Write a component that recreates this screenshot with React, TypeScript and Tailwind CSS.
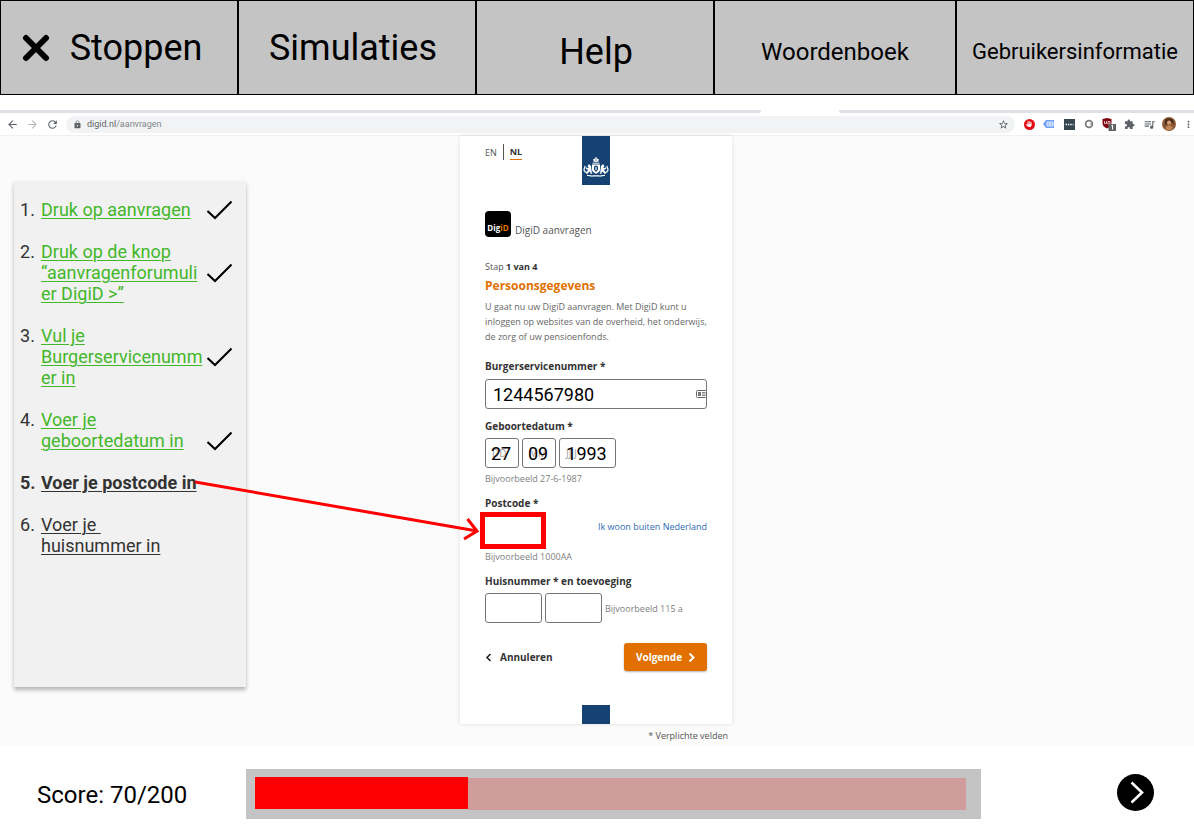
import React from "react";
import { clsx } from "clsx";
import {
  MdArrowBack,
  MdArrowForward,
  MdExtension,
  MdLock,
  MdMoreVert,
  MdQueueMusic,
  MdRefresh,
  MdStarBorder,
} from "react-icons/md";
import { FaHand } from "react-icons/fa6";

interface Step {
  text: string;
  state: "done" | "current" | "todo";
  checkAtEnd?: boolean;
}

const steps: Step[] = [
  { text: "Druk op aanvragen", state: "done" },
  { text: "Druk op de knop “aanvragenforumulier DigiD >”", state: "done" },
  { text: "Vul je Burgerservicenummer in", state: "done" },
  { text: "Voer je geboortedatum in", state: "done", checkAtEnd: true },
  { text: "Voer je postcode in", state: "current" },
  { text: "Voer je\u00a0\nhuisnummer in", state: "todo" },
];

const navButton = "flex items-center justify-center border border-black bg-[#c4c4c4] whitespace-nowrap";

const TopNav = () => (
  <nav className="grid h-[95px] grid-cols-[238fr_238fr_238fr_242fr_238fr] text-black">
    <button className={clsx(navButton, "gap-5 pr-3.5 text-4xl")}>
      <svg width="28" height="28" viewBox="0 0 28 28" aria-hidden="true">
        <path d="M4 4 24 24M24 4 4 24" stroke="#000" strokeWidth="6" strokeLinecap="round" />
      </svg>
      Stoppen
    </button>
    <button className={clsx(navButton, "pr-2 text-4xl")}>Simulaties</button>
    <button className={clsx(navButton, "pt-2 pl-0.5 text-4xl")}>Help</button>
    <button className={clsx(navButton, "pt-2 text-2xl")}>Woordenboek</button>
    <button className={clsx(navButton, "pt-2 text-[22px]")}>Gebruikersinformatie</button>
  </nav>
);

const Cell = ({ children }: { children: React.ReactNode }) => (
  <span className="flex w-5 shrink-0 items-center justify-center">{children}</span>
);

const BrowserBar = () => (
  <div className="mt-[15px]">
    <div className="flex h-[3px] justify-between">
      <div className="w-[761px] rounded-br-[3px] bg-[#dee1e6]" />
      <div className="w-[355px] rounded-bl-[3px] bg-[#dee1e6]" />
    </div>
    <div className="flex h-[23px] items-center border-b border-[#f0f0f0] bg-white pl-0.5 text-[#5f6368]">
      <Cell><MdArrowBack size={13} /></Cell>
      <Cell><MdArrowForward size={13} className="text-[#b5b7ba]" /></Cell>
      <Cell><MdRefresh size={13} /></Cell>
      <div className="ml-1 flex h-[17px] flex-1 items-center rounded-full bg-[#f1f3f4] pr-1.5 pl-[7px]">
        <MdLock size={9} />
        <span className="ml-[5px] flex-1 text-[9px] leading-none">
          digid.nl<span className="text-[#80868b]">/aanvragen</span>
        </span>
        <MdStarBorder size={11} />
      </div>
      <div className="ml-1 flex">
        <Cell>
          <span className="flex size-[11px] items-center justify-center rounded-full bg-[#e30b17] text-white">
            <FaHand size={6} />
          </span>
        </Cell>
        <Cell>
          <svg width="12" height="10" viewBox="0 0 12 10">
            <path d="M3 1h8v8H3L0 5z" fill="#6ea0f7" />
            <path d="M4 3h6v4H4zM7 3v4M4 5h6" fill="none" stroke="#fff" strokeWidth="0.8" />
          </svg>
        </Cell>
        <Cell>
          <svg width="11" height="11" viewBox="0 0 11 11">
            <path d="M0 0h11v11H0z" fill="#37474f" />
            <path d="M1.500 5.500h8" stroke="#fff" strokeWidth="1.300" strokeDasharray="1.4 1" />
          </svg>
        </Cell>
        <Cell>
          <svg width="10" height="10" viewBox="0 0 10 10">
            <circle cx="5" cy="5" r="3.400" fill="#fff" stroke="#7a7d80" strokeWidth="1.800" />
            <path d="M5.500 5.500h2V3.500z" fill="#7a7d80" />
          </svg>
        </Cell>
        <Cell>
          <svg width="14" height="14" viewBox="0 0 14 14">
            <path d="M5 1 9.500 2v4c0 3-2 4.300-4.500 5.500C2.500 10.300.5 9 .5 6V2z" fill="#800610" />
            <path d="M2.500 4v2.500h2V4M6 7V4.500h2V7H6" fill="none" stroke="#fff" strokeWidth="0.7" />
            <path d="M6.500 7H14v7H6.500z" fill="#5f6368" />
            <path d="M9.500 9 10.500 8.500V12.500" fill="none" stroke="#fff" strokeWidth="1.1" />
          </svg>
        </Cell>
        <Cell><MdExtension size={11} /></Cell>
        <Cell><MdQueueMusic size={13} /></Cell>
        <Cell>
          <svg width="14" height="14" viewBox="0 0 14 14">
            <circle cx="7" cy="7" r="7" fill="#8a5a35" />
            <path d="M3 3c2-2 6-2 8 0l1 4-3-2-4 1-2 3z" fill="#4a2c1a" />
            <circle cx="7" cy="5.500" r="2" fill="#d9a27a" />
            <path d="M3.500 12c1-4 5-5 7-1.500L9 13H5z" fill="#c08552" />
          </svg>
        </Cell>
        <span className="flex w-[15px] items-center justify-end">
          <MdMoreVert size={11} />
        </span>
      </div>
    </div>
  </div>
);

const StepList = () => (
  <aside className="mt-[45px] ml-3.5 h-[506px] w-[232px] bg-[#f1f1f1] pt-[18px] pl-1.5 shadow-[0_3px_4px_rgba(0,0,0,0.28)]">
    <ol className="flex flex-col gap-[21px] text-lg/[21px] text-[#333]">
      {steps.map((step, index) => (
        <li
          key={step.text}
          className={clsx(
            "flex",
            step.checkAtEnd ? "items-end" : "items-center",
            step.state === "current" && "font-bold"
          )}
        >
          <span className="w-[21px] shrink-0 self-start">{index + 1}.</span>
          <span className="w-[163px] shrink-0">
            <a
              href="#"
              className={clsx(
                "whitespace-pre-line break-words underline decoration-1 underline-offset-2",
                step.state === "done" && "text-[#43b72a]"
              )}
            >
              {step.text}
            </a>
          </span>
          {step.state === "done" && (
            <svg className="ml-[3px] shrink-0" width="25" height="21" viewBox="0 0 25 21" aria-label="Klaar">
              <path d="M0.500 12 8 19 24.500 2.500" fill="none" stroke="#000" strokeWidth="2" />
            </svg>
          )}
        </li>
      ))}
    </ol>
  </aside>
);

const Crest = () => (
  <svg width="28" height="49" viewBox="0 0 28 49" role="img" aria-label="Rijksoverheid">
    <path d="M0 0h28v49H0z" fill="#154273" />
    <g fill="#fff">
      <path d="M13.500 21h1v1.500h-1zM11 23.500c1-1.500 5-1.500 6 0l-.7 2.500h-4.600z" />
      <path d="M10.500 26.700h7v1h-7z" />
      <path d="M10 28.500h8v5c0 2-2 3.500-4 4.300-2-.8-4-2.300-4-4.300z" />
      <path d="M9 30c-.7-1.700-2.500-2-3.500-1l1 .7-1.200 1 1.500.8c-.3 1.200-1.800 1-2.300-.3l-.9.6c.2 1.200 1.300 2 2.400 2-.3 1.200-1.400 1.700-2.200 2.700l.6 1.300h1.800l-.5-.9 2.400-1.400.4 2.300h1.900l-.6-1z" />
      <path d="M4.200 36c-2-1.200-1.800-3-1-4 .6-1 .4-2-.4-2.600l-.6 1c.3.500 0 .9-.4 1.500-1 1.800-.3 3.800 2 5z" />
      <path d="M19 30c.7-1.700 2.500-2 3.500-1l-1 .7 1.200 1-1.500.8c.3 1.200 1.800 1 2.300-.3l.9.6c-.2 1.200-1.300 2-2.400 2 .3 1.200 1.400 1.700 2.200 2.700l-.6 1.300h-1.800l.5-.9-2.400-1.400-.4 2.300h-1.900l.6-1z" />
      <path d="M23.800 36c2-1.200 1.800-3 1-4-.6-1-.4-2 .4-2.600l.6 1c-.3.500 0 .9.400 1.500 1 1.800.3 3.800-2 5z" />
      <path d="M5 38.700c3 .1 4 1.100 6 .5h6c2 .6 3-.4 6-.5v1.300c-2 0-3.500.8-6 .6h-6c-2.500.2-4-.6-6-.6z" />
    </g>
    <path d="M11.500 24.500 12.500 25.500M14 23v2.500M16.500 24.500 15.500 25.500" stroke="#154273" strokeWidth="0.600" />
    <path d="M12 30.500 14 29.500l2 1v3L14 36l-2-2.500z" fill="#154273" />
    <path d="M13.400 31h1.200v3h-1.200z" fill="#fff" />
  </svg>
);

const fieldClass = "h-[30px] rounded-[3px] border border-[#767676] bg-transparent text-lg text-black font-[Roboto,sans-serif]";
const labelClass = "block text-[10px] leading-[15px] font-bold text-[#333]";
const hintClass = "text-[9px] leading-[15px] text-[#808080]";

interface DateFieldProps {
  label: string;
  ghost: string;
  value: string;
  wide?: boolean;
}

const DateField: React.FC<DateFieldProps> = ({ label, ghost, value, wide }) => (
  <div className="relative">
    <span className="absolute inset-y-0 left-[7px] flex items-center text-[10px] text-[#a0a0a0]" aria-hidden="true">
      {ghost}
    </span>
    <input
      aria-label={label}
      defaultValue={value}
      className={clsx(fieldClass, "relative block pr-0.5 text-center", wide ? "w-[57px]" : "w-[34px]")}
    />
  </div>
);

const RequestForm = () => (
  <div className="font-['Open_Sans',sans-serif]">
    <form className="bg-white px-[25px] shadow-[0_0_4px_rgba(0,0,0,0.12)]">
      <div className="grid grid-cols-[1fr_28px_1fr]">
        <div className="mt-2 flex h-4 items-center text-[9px] leading-[15px] text-[#555]">
          <a href="#">EN</a>
          <span className="mx-1.5 h-4 w-px bg-[#555]" />
          <a href="#" className="border-b border-[#e17000] font-bold text-[#333]">NL</a>
        </div>
        <Crest />
      </div>

      <div className="mt-[26px] flex items-end gap-1">
        <div className="flex size-[26px] items-end justify-center rounded bg-black pb-1 text-[8px] leading-[10px] font-bold text-white">
          Dig<span className="text-[#e17000]">iD</span>
        </div>
        <span className="text-[10px] leading-[13px] text-[#555]">DigiD aanvragen</span>
      </div>

      <p className="mt-[22px] text-[9px] leading-[15px] text-[#555]">
        Stap <b className="text-[#333]">1 van 4</b>
      </p>
      <h1 className="mt-0.5 text-xs/5 font-bold text-[#e17000]">Persoonsgegevens</h1>
      <p className="mt-[3px] text-[9px] leading-[15px] whitespace-nowrap text-[#666]">
        U gaat nu uw DigiD aanvragen. Met DigiD kunt u<br />
        inloggen op websites van de overheid, het onderwijs,<br />
        de zorg of uw pensioenfonds.
      </p>

      <label htmlFor="bsn" className={clsx(labelClass, "mt-[15px]")}>Burgerservicenummer *</label>
      <div className="relative mt-[5px]">
        <input id="bsn" defaultValue="1244567980" className={clsx(fieldClass, "block w-full px-[7px]")} />
        <svg className="absolute top-[11px] right-0" width="11" height="8" viewBox="0 0 11 8" aria-hidden="true">
          <rect x="0.500" y="0.500" width="10" height="7" rx="1" fill="#fff" stroke="#666" />
          <path d="M2 2h3v4H2z" fill="#777" />
          <path d="M6 2.500h3.500M6 4h3.500M6 5.500h3.500" stroke="#666" strokeWidth="0.800" />
        </svg>
      </div>

      <fieldset className="mt-[10px]">
        <legend className={labelClass}>Geboortedatum *</legend>
        <div className="mt-1 flex gap-[3px]">
          <DateField label="Dag" ghost="DD" value="27" />
          <DateField label="Maand" ghost="MM" value="09" />
          <DateField label="Jaar" ghost="JJJJ" value="1993" wide />
        </div>
      </fieldset>
      <p className={clsx(hintClass, "mt-[3px]")}>Bijvoorbeeld 27-6-1987</p>

      <label htmlFor="postcode" className={clsx(labelClass, "mt-[10px]")}>Postcode *</label>
      <div className="mt-px -ml-[5px] flex items-center justify-between">
        <input id="postcode" className="h-[37px] w-[66px] border-5 border-[#f00] bg-white px-1 text-lg" />
        <a href="#" className="pb-2 text-[9px] leading-[15px] text-[#2f6cb3]">Ik woon buiten Nederland</a>
      </div>
      <p className={hintClass}>Bijvoorbeeld 1000AA</p>

      <label htmlFor="huisnummer" className={clsx(labelClass, "mt-[10px]")}>Huisnummer * en toevoeging</label>
      <div className="mt-1 flex items-center gap-[3px]">
        <input id="huisnummer" className={clsx(fieldClass, "w-[57px] px-1")} />
        <input aria-label="Toevoeging" className={clsx(fieldClass, "w-[57px] px-1")} />
        <span className={hintClass}>Bijvoorbeeld 115 a</span>
      </div>

      <div className="mt-5 flex items-center justify-between text-[10px] font-bold">
        <button type="button" className="flex items-center gap-2 text-[#333]">
          <svg width="7" height="9" viewBox="0 0 7 9" aria-hidden="true">
            <path d="M5.500 1 2 4.500 5.500 8" fill="none" stroke="#222" strokeWidth="1.600" />
          </svg>
          Annuleren
        </button>
        <button
          type="button"
          className="flex h-7 w-[83px] items-center justify-center gap-1.5 rounded-[3px] bg-[#e17000] text-white shadow-[0_1px_2px_rgba(0,0,0,0.3)]"
        >
          Volgende
          <svg width="7" height="9" viewBox="0 0 7 9" aria-hidden="true">
            <path d="M1.500 0.500 5.500 4.500 1.500 8.500" fill="none" stroke="#fff" strokeWidth="2" />
          </svg>
        </button>
      </div>
      <div className="mx-auto mt-[34px] h-[19px] w-7 bg-[#154273]" />
    </form>
    <p className="mt-1 pr-1 text-right text-[9px] leading-[15px] text-[#555]">* Verplichte velden</p>
  </div>
);

const ScoreBar = () => (
  <footer className="flex items-center bg-white pt-6 pr-10 pl-[37px] text-black">
    <span id="score" className="w-[209px] shrink-0 pt-0.5 text-2xl">Score: 70/200</span>
    <div className="h-[50px] flex-1 bg-[#c4c4c4] pt-2 pr-[15px] pl-[9px]">
      <div className="flex" role="progressbar" aria-labelledby="score" aria-valuenow={70} aria-valuemax={200}>
        <div className="h-8 w-[30%] bg-[#f00]" />
        <div className="mt-px h-8 flex-1 bg-[#cf9d9c]" />
      </div>
    </div>
    <button aria-label="Volgende" className="mb-1 ml-[136px] flex size-[37px] items-center justify-center rounded-full bg-black">
      <svg width="37" height="37" viewBox="0 0 37 37" aria-hidden="true">
        <path d="M14.500 8.500 25 18.500 14.500 28.500" fill="none" stroke="#fff" strokeWidth="2.600" />
      </svg>
    </button>
  </footer>
);

const App = () => (
  <div className="min-h-screen bg-white font-[Roboto,sans-serif]">
    <TopNav />
    <BrowserBar />
    <main className="relative grid grid-cols-[1fr_272px_1fr] bg-[#fbfbfb] pr-0.5 pb-0.5">
      <StepList />
      <RequestForm />
      {/* pointer from the current step to its field */}
      <svg className="absolute top-[340px] left-[195px]" width="287" height="68" viewBox="0 0 287 68" aria-hidden="true">
        <path d="M0 6 282 55M272.500 43 282 55 269 63" fill="none" stroke="#f00" strokeWidth="3" />
      </svg>
    </main>
    <ScoreBar />
  </div>
);

export default App;
